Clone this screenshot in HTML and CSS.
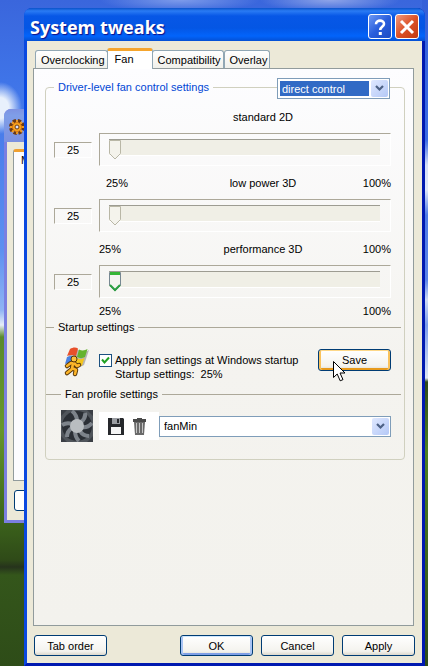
FILE: index.html
```
<!DOCTYPE html>
<html lang="en">
<head>
  <meta charset="UTF-8">
  <title>System tweaks</title>
  <meta name="viewport" content="width=device-width, initial-scale=1.0">
  <link rel="stylesheet" href="styles.css">
</head>
<body>
  <div class="back-window">
    <div class="back-title">
      <svg width="16" height="16" viewBox="0 0 16 16">
        <circle cx="8" cy="8" r="5.5" fill="none" stroke="#6b3a14" stroke-width="5" stroke-dasharray="2.800 1.520"/>
        <path d="M8 1v14M1 8h14M3 3l10 10M13 3L3 13" stroke="#f59a18" stroke-width="1.800"/>
        <circle cx="8" cy="8" r="4.500" fill="#f8a520" stroke="#d97a10"/>
        <circle cx="8" cy="8" r="2" fill="#d9e2ff" stroke="#6b3a14"/>
      </svg>
    </div>
    <div class="back-body">
      <div class="back-panel">M</div>
      <div class="back-button"></div>
    </div>
  </div>

  <div class="dialog">
    <div class="titlebar">
      <h1>System tweaks</h1>
      <button class="caption help" aria-label="Help">
        <svg width="22" height="22" viewBox="0 0 22 22"><path d="M7 8.2C7 3.4 15.2 3.6 15 8c-.1 2.8-3.8 2.900-3.800 6" fill="none" stroke="#fff" stroke-width="2.600"/><path d="M9.800 16h3v3h-3z" fill="#fff"/></svg>
      </button>
      <button class="caption close" aria-label="Close">
        <svg width="22" height="22" viewBox="0 0 22 22"><path d="M5 5l12 12M17 5L5 17" stroke="#fff" stroke-width="3"/></svg>
      </button>
    </div>

    <div class="content">
      <div class="tabs" role="tablist">
        <button class="tab" role="tab">Overclocking</button>
        <button class="tab active" role="tab" aria-selected="true">Fan</button>
        <button class="tab" role="tab">Compatibility</button>
        <button class="tab" role="tab">Overlay</button>
      </div>

      <div class="panel">
        <fieldset class="group">
          <legend class="blue">Driver-level fan control settings</legend>
          <div class="combo mode">
            <select aria-label="Fan control mode"><option>direct control</option></select>
            <span class="arrow"><svg width="9" height="7" viewBox="0 0 9 7"><path d="M1 1l3.500 3.500L8 1" fill="none" stroke="#4d6185" stroke-width="2.200"/></svg></span>
          </div>

          <div class="scale"><span></span><label for="fan2d">standard 2D</label><span></span></div>
          <div class="fan-row">
            <output class="value" for="fan2d">25</output>
            <div class="track"><input type="range" id="fan2d" min="25" max="100" value="25" disabled></div>
          </div>
          <div class="scale first"><span>25%</span><label for="fanlow">low power 3D</label><span>100%</span></div>
          <div class="fan-row">
            <output class="value" for="fanlow">25</output>
            <div class="track"><input type="range" id="fanlow" min="25" max="100" value="25" disabled></div>
          </div>
          <div class="scale"><span>25%</span><label for="fan3d">performance 3D</label><span>100%</span></div>
          <div class="fan-row">
            <output class="value" for="fan3d">25</output>
            <div class="track"><input type="range" id="fan3d" min="25" max="100" value="25"></div>
          </div>
          <div class="scale last"><span>25%</span><span></span><span>100%</span></div>

          <fieldset class="section">
            <legend>Startup settings</legend>
            <div class="startup">
              <svg class="flag" width="28" height="30" viewBox="0 0 28 30">
                <path d="M7 4c4-3 7-2 10 0 3 1 6 1 9-1l-5 15c-3 2-6 2-9 0-3-1-6-1-9 1z" fill="#777" opacity=".5"/>
                <path d="M7 2c3-2 6-2 8-.5L13 9C10 7.500 7 7.500 4 9z" fill="#e8502a"/>
                <path d="M16 2.500c3 1.500 6 1 8.500-.5L22 10c-3 1.500-5 1.500-8 0z" fill="#63b32e"/>
                <path d="M4 10c3-1.500 6-1.500 8.500 0L10.500 17C8 15.500 5 15.500 2 17z" fill="#4b82e0"/>
                <path d="M13.500 11c3 1.500 5 1.500 8 0l-2.500 7.500c-3 1.500-5 1-7.500-.5z" fill="#f4c51c"/>
                <g fill="none" stroke="#54350a" stroke-width="4.500" stroke-linecap="round" stroke-linejoin="round"><path d="M10 16l-1 6-5 4M9 21l4 2-1 4M4 19l4-3h3l3 3 2-1"/></g>
                <g fill="none" stroke="#fbb429" stroke-width="2.600" stroke-linecap="round" stroke-linejoin="round"><path d="M10 16l-1 6-5 4M9 21l4 2-1 4M4 19l4-3h3l3 3 2-1"/></g>
                <circle cx="11" cy="12" r="3" fill="#fcc33d" stroke="#54350a"/>
              </svg>
              <div class="startup-text">
                <label><input type="checkbox" checked>Apply fan settings at Windows startup</label>
                <p>Startup settings: &nbsp;25%</p>
              </div>
              <div class="save-wrap">
                <button class="btn hot">Save</button>
                <svg class="cursor" width="13" height="21" viewBox="0 0 13 21"><path d="M.5.500v16l3.700-3.500 3 6.800 2.800-1.200-3-6.600h5z" fill="#fff" stroke="#000"/></svg>
              </div>
            </div>
          </fieldset>

          <fieldset class="section profile-section">
            <legend>Fan profile settings</legend>
            <div class="profile">
              <svg width="32" height="32" viewBox="0 0 32 32">
                <rect width="32" height="32" fill="#50555b"/>
                <circle cx="16" cy="16" r="15" fill="#2b2f35"/>
                <g stroke="#7d838a" stroke-width="4" fill="none">
                  <path d="M16 11Q16 5 11 1M20 12Q25 8 24 3M21 17Q27 18 31 13M19 21Q22 26 28 26M14 21Q14 27 18 31M11 18Q6 21 6 27M11 14Q6 12 1 15"/>
                </g>
                <path d="M0 0h6L0 6zM32 0v6l-6-6zM0 32v-6l6 6zM32 32h-6l6-6z" fill="#3b3f45"/>
                <circle cx="16" cy="16" r="7" fill="#b9bdc0"/>
              </svg>
              <div class="tools">
                <button aria-label="Save profile">
                  <svg width="16" height="17" viewBox="0 0 16 17"><path d="M0 0h15l1 1v16H0z" fill="#26282c"/><path d="M4 0h8v6H4z" fill="#9a9da2"/><path d="M9 1h2v4H9z" fill="#26282c"/><path d="M3 9h10v7H3z" fill="#f4f4f4"/></svg>
                </button>
                <button aria-label="Delete profile">
                  <svg width="13" height="17" viewBox="0 0 13 17"><path d="M4 0h5v1h4v3H0V1h4z" fill="#4a4a4a"/><path d="M1 4h11l-1 13H2z" fill="#6a6a6a"/><path d="M3.500 5v10M6.500 5v10M9.500 5v10" stroke="#c4c4c4"/></svg>
                </button>
              </div>
              <div class="combo name">
                <select aria-label="Fan profile"><option>fanMin</option></select>
                <span class="arrow"><svg width="9" height="7" viewBox="0 0 9 7"><path d="M1 1l3.500 3.500L8 1" fill="none" stroke="#4d6185" stroke-width="2.200"/></svg></span>
              </div>
            </div>
          </fieldset>
        </fieldset>
      </div>

      <div class="footer">
        <button class="btn tab-order">Tab order</button>
        <button class="btn default">OK</button>
        <button class="btn">Cancel</button>
        <button class="btn">Apply</button>
      </div>
    </div>
  </div>
</body>
</html>
```
FILE: styles.css
```
* {
  box-sizing: border-box;
}
body {
  margin: 0;
  min-height: 100vh;
  padding: 8px 3px 0 24px;
  position: relative;
  overflow: hidden;
  font-family: "Liberation Sans", Arial, sans-serif;
  font-size: 11px;
  line-height: 14px;
  color: #000;
  background:
    linear-gradient(#3560d8 0, #3b6ce4 140px, #d5e0f8 165px, #dfe8fa 190px, #4f7ce6 215px, #5a84e8 280px, #cfdcf6 300px, #7a9cec 325px, #dde6f4 378px, #2f4a18 382px, #4f8020 450px, #2e4c18 666px) right / 6px 100% no-repeat,
    radial-gradient(ellipse 22px 26px at 0 108px, #e8f0fc 40%, transparent),
    radial-gradient(ellipse 80px 12px at 180px 0, #7d9bea, transparent),
    radial-gradient(ellipse 70px 12px at 330px 0, #8ea4e8, transparent),
    linear-gradient(#3a66dc 0, #3f74e8 80px, #5d90f0 250px, #8fb4f4 310px, #e6edf8 325px, #5a8a2c 337px, #67962a 430px, #3f6a1c 510px, #2f4a18 560px, #26331c 567px, #34561b 575px, #2e4c18 666px);
}
button, select, input {
  font: inherit;
  color: inherit;
  margin: 0;
  padding: 0;
}
svg {
  display: block;
}

/* inactive window behind the dialog */
.back-window {
  position: absolute;
  left: 4px;
  top: 109px;
  width: 120px;
  height: 414px;
  display: flex;
  flex-direction: column;
  background: #7b7fe0;
  border-radius: 7px 0 0 0;
  padding: 0 3px 3px;
}
.back-title {
  height: 33px;
  margin: 0 -3px;
  padding: 10px 5px;
  border-radius: 7px 0 0 0;
  background: linear-gradient(#7d92e2, #7f9ee8 20%, #7b90e0);
}
.back-body {
  flex: 1;
  display: flex;
  flex-direction: column;
  gap: 9px;
  padding: 7px 6px 9px;
  background: #ece9d8;
}
.back-panel {
  flex: 1;
  padding: 1px 7px;
  background: #fcfcfe;
  border: 1px solid #919b9c;
  border-top: 3px solid #f0a030;
  border-radius: 3px 0 0 0;
}
.back-button {
  height: 21px;
  margin-left: 1px;
  background: #fff;
  border: 1px solid #003c74;
  border-radius: 3px;
}

/* dialog frame */
.dialog {
  position: relative;
  min-height: calc(100vh - 8px);
  display: flex;
  flex-direction: column;
  border: 3px solid #0a48e0;
  border-top: 0;
  border-right-color: #0019b0;
  border-bottom-color: #0019b0;
  border-radius: 8px 8px 0 0;
  background: #0a48e0;
}
.titlebar {
  height: 33px;
  margin: 0 -3px;
  padding: 4px 6px 0;
  display: flex;
  align-items: center;
  gap: 3px;
  border-radius: 8px 8px 0 0;
  background: linear-gradient(#0a52c8 0, #2a7bf4 3px, #0757e6 8px, #0456e4 20px, #0264fb 28px, #0450d4 33px);
}
.titlebar h1 {
  flex: 1;
  margin: 0;
  font: bold 18px/24px "Open Sans", "Noto Sans", sans-serif;
  color: #fff;
  text-shadow: 1px 1px 1px #0f1089;
}
.caption {
  width: 24px;
  height: 25px;
  border: 1px solid #fff;
  border-radius: 3px;
}
.help {
  background: linear-gradient(135deg, #6c98f4, #2a5edc 50%, #1c4cc4);
}
.close {
  background: linear-gradient(135deg, #f09a80, #dc5228 50%, #c23a10);
}
.content {
  flex: 1;
  display: flex;
  flex-direction: column;
  padding: 7px 7px 7px 6px;
  background: #ece9d8;
}

/* tabs */
.tabs {
  display: flex;
  align-items: flex-end;
  padding-left: 2px;
}
.tab {
  height: 18px;
  padding: 0 2px 0 5px;
  border: 1px solid #91a7b4;
  border-bottom: 0;
  border-radius: 3px 3px 0 0;
  background: linear-gradient(#fff, #f0f0ea);
}
.tab.active {
  position: relative;
  height: 21px;
  margin: 0 -1px -1px;
  padding: 0 18px 3px 7px;
  border-top: 3px solid #f5a52d;
  background: #fff;
}
.panel {
  flex: 1;
  padding: 11px 8px 11px 11px;
  border: 1px solid #919b9c;
  margin-right: 1px;
  background: linear-gradient(#fdfdff, #f4f3ef 290px, #f3f2ed);
}

/* group boxes */
fieldset {
  min-width: 0;
  margin: 0;
  padding: 0;
  border: 0;
}
legend {
  height: 14px;
  margin-left: 8px;
  padding: 0 4px;
}
legend.blue {
  color: #0046d5;
}
.group {
  position: relative;
  border: 1px solid #d0d0bf;
  border-radius: 4px;
  padding-top: 6px;
}
.section {
  margin: 0 3px 0 0;
  border-top: 1px solid #aca899;
}

/* drop-downs */
.combo {
  display: flex;
  height: 21px;
  padding: 2px;
  gap: 3px;
  background: #fff;
  border: 1px solid #7f9db9;
}
.combo select {
  flex: 1;
  min-width: 0;
  padding-left: 2px;
  appearance: none;
  border: 0;
  border-radius: 0;
  background: #fff;
}
.mode {
  position: absolute;
  top: -16px;
  right: 14px;
  width: 113px;
}
.mode select {
  color: #fff;
  background: #316ac5;
}
.arrow {
  width: 17px;
  margin: -1px;
  display: flex;
  align-items: center;
  justify-content: center;
  border-radius: 2px;
  background: linear-gradient(135deg, #dfe8ff, #b4c8f6);
}

/* fan sliders */
.fan-row {
  display: flex;
  align-items: center;
  gap: 7px;
  padding: 0 13px 0 8px;
}
.value {
  width: 38px;
  height: 16px;
  text-align: center;
  border: 1px solid;
  border-color: #aca899 #fff #fff #aca899;
}
.track {
  flex: 1;
  height: 33px;
  padding: 5px 10px 0 9px;
  border: 1px solid;
  border-color: #aca899 #fff #fff #aca899;
}
.track input {
  display: block;
  width: 100%;
  height: 21px;
  appearance: none;
  background: linear-gradient(#9d9c92 1px, #f0efe6 1px, #f0efe6 16px, #fff 16px, #fff 17px, transparent 17px);
}
.track input::-webkit-slider-thumb {
  appearance: none;
  width: 12px;
  height: 21px;
  background: url("data:image/svg+xml,%3Csvg xmlns='http://www.w3.org/2000/svg' width='12' height='21'%3E%3Cpath d='M.5 1.500h11v13l-5.500 5.500L.5 14.500z' fill='%23f5f4f0' stroke='%23778892'/%3E%3Cpath d='M1 1h10v3H1z' fill='%2335b535'/%3E%3Cpath d='M1 14l5 5 5-5' fill='none' stroke='%232ea043' stroke-width='2'/%3E%3C/svg%3E");
}
.track input:disabled::-webkit-slider-thumb {
  background: url("data:image/svg+xml,%3Csvg xmlns='http://www.w3.org/2000/svg' width='12' height='21'%3E%3Cpath d='M.5 1.500h11v13l-5.500 5.500L.5 14.500z' fill='%23f4f3ec' stroke='%23b9b7a6'/%3E%3C/svg%3E");
}
.scale {
  height: 33px;
  display: grid;
  grid-template-columns: minmax(0, 1fr) auto minmax(0, 1fr);
  align-items: center;
  padding: 0 13px 0 53px;
}
.scale label {
  padding-left: 36px;
}
.scale span:last-child {
  text-align: right;
}
.scale.first span:first-child {
  padding-left: 7px;
}
.scale.last {
  height: 22px;
  padding-top: 4px;
}

/* startup settings */
.startup {
  display: flex;
  align-items: flex-start;
  padding: 13px 10px 6px 17px;
}
.startup-text {
  flex: 1;
  padding: 6px 0 0 8px;
}
.startup-text label {
  display: flex;
  align-items: center;
  gap: 3px;
  white-space: nowrap;
}
.startup-text p {
  margin: 0;
  padding-left: 16px;
}
.startup-text input {
  appearance: none;
  width: 13px;
  height: 13px;
  border: 1px solid #1c5180;
  background: #fff;
}
.startup-text input:checked {
  background: #fff url("data:image/svg+xml,%3Csvg xmlns='http://www.w3.org/2000/svg' width='11' height='11'%3E%3Cpath d='M2 4.500l2.500 3L9 2.500' fill='none' stroke='%2321a121' stroke-width='2'/%3E%3C/svg%3E");
}
.save-wrap {
  position: relative;
  padding-top: 2px;
}
.cursor {
  position: absolute;
  left: 15px;
  top: 14px;
}

/* fan profile */
.profile-section legend {
  margin-left: 15px;
}
.profile {
  display: flex;
  align-items: center;
  padding: 9px 10px 17px 15px;
}
.tools {
  display: flex;
  gap: 9px;
  margin-left: 6px;
  padding: 6px 13px 5px 9px;
  background: #fff;
}
.tools button {
  border: 0;
  background: none;
}
.name {
  flex: 1;
}

/* buttons */
.btn {
  width: 73px;
  height: 21px;
  border: 1px solid #003c74;
  border-radius: 3px;
  background: linear-gradient(#fff, #f4f3ee 80%, #dcd8cc);
}
.btn.hot {
  height: 22px;
  box-shadow: inset 0 1px #fdd889, inset 2px 0 #f9c25c, inset -2px 0 #f9c25c, inset 0 -2px #e79a1c;
}
.btn.default {
  box-shadow: inset 0 1px #cee7ff, inset 2px 0 #a9c4f4, inset -2px 0 #a9c4f4, inset 0 -2px #7f9fe6;
}
.footer {
  display: flex;
  gap: 8px;
  padding: 9px 0 0 1px;
}
.tab-order {
  margin-right: auto;
}
```
